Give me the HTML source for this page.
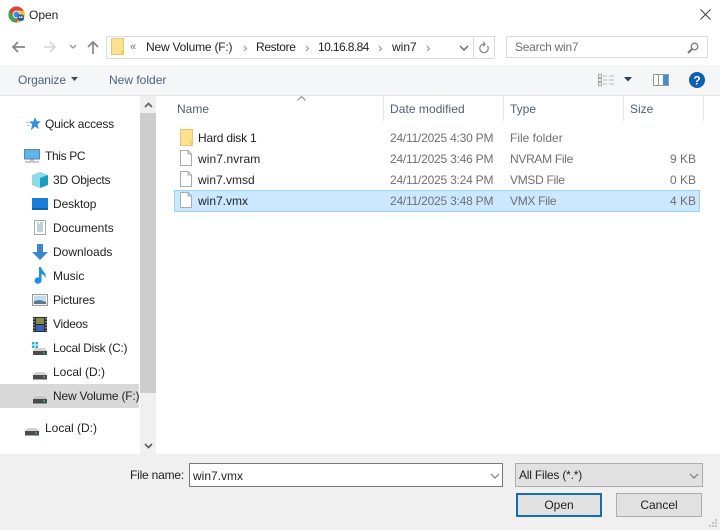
<!DOCTYPE html>
<html><head><meta charset="utf-8"><style>
html,body{margin:0;padding:0;background:#fff}
body{width:720px;height:530px;position:relative;overflow:hidden;font-family:"Liberation Sans",sans-serif;font-size:12px;color:#222}
.a{position:absolute}
.t{position:absolute;white-space:nowrap;line-height:16px}
svg{position:absolute;overflow:visible}
.g{color:#707070}
.h{color:#4f6178}
.n{letter-spacing:-.2px}
</style></head><body>

<!-- title -->
<svg style="left:8px;top:6px" width="17" height="17" viewBox="0 0 16 16">
<circle cx="8" cy="8" r="7.6" fill="#d9463a"/>
<path d="M1.2 4.600 A7.600 7.600 0 0 0 6.500 15.500 L9 10 L5 9z" fill="#3ea552"/>
<path d="M8 4.500H15A7.600 7.600 0 0 1 8 15.600 L11 9z" fill="#f6c21b"/>
<circle cx="8" cy="8" r="3.600" fill="#fff"/><circle cx="8" cy="8" r="2.800" fill="#4a86e0"/>
<rect x="9" y="8" width="6" height="6" rx="2" fill="#1f5fa8"/><circle cx="11" cy="10.500" r=".8" fill="#fff"/><circle cx="13" cy="10.500" r=".8" fill="#fff"/>
</svg>
<div class="t" style="left:29px;top:7px">Open</div>
<svg style="left:700px;top:9px" width="11" height="11"><path d="M.5 .5L10.500 10.500M10.500 .5L.5 10.500" stroke="#333" stroke-width=".9" fill="none"/></svg>

<!-- nav -->
<svg style="left:12px;top:41px" width="14" height="12"><path d="M1 6H13M6 1L1 6L6 11" stroke="#858585" stroke-width="1.700" fill="none"/></svg>
<svg style="left:43px;top:41px" width="14" height="12"><path d="M1 6H12M7 1L12 6L7 11" stroke="#d6d6d6" stroke-width="1.600" fill="none"/></svg>
<svg style="left:69px;top:44px" width="8" height="6"><path d="M1 1L4 4L7 1" stroke="#969696" stroke-width="1.300" fill="none"/></svg>
<svg style="left:87px;top:41px" width="12" height="13"><path d="M6 13V1M1 6L6 1L11 6" stroke="#858585" stroke-width="1.700" fill="none"/></svg>

<!-- address -->
<div class="a" style="left:106px;top:36px;width:387px;height:21px;border:1px solid #dcdcdc;background:#fff"></div>
<div class="a" style="left:473px;top:37px;width:1px;height:21px;background:#dcdcdc"></div>
<svg style="left:111px;top:38px" width="13" height="17"><path d="M.5 .5H12.500V16.500H.5z" fill="#fce28e" stroke="#e3c877"/><path d="M10 12h2.500v4.500H10z" fill="#f4cf6f"/></svg>
<div class="t g" style="left:130px;top:39px;font-size:11px">&#171;</div>
<div class="t n" style="left:146px;top:39px">New Volume (F:)</div>
<svg style="left:243px;top:45px" width="5" height="7"><path d="M1 1L3.500 3.500L1 6" stroke="#999" stroke-width="1.200" fill="none"/></svg>
<div class="t" style="left:256px;top:39px;letter-spacing:-.35px">Restore</div>
<svg style="left:305px;top:45px" width="5" height="7"><path d="M1 1L3.500 3.500L1 6" stroke="#999" stroke-width="1.200" fill="none"/></svg>
<div class="t" style="left:318px;top:39px;letter-spacing:-.6px">10.16.8.84</div>
<svg style="left:378px;top:45px" width="5" height="7"><path d="M1 1L3.500 3.500L1 6" stroke="#999" stroke-width="1.200" fill="none"/></svg>
<div class="t" style="left:392px;top:39px">win7</div>
<svg style="left:426px;top:45px" width="5" height="7"><path d="M1 1L3.500 3.500L1 6" stroke="#999" stroke-width="1.200" fill="none"/></svg>
<svg style="left:459px;top:45px" width="10" height="7"><path d="M1 1L5 5L9 1" stroke="#6d6d6d" stroke-width="1.500" fill="none"/></svg>
<svg style="left:478px;top:41px" width="12" height="13"><path d="M9.500 5A4.200 4.200 0 1 1 5.500 3.200H6.500M5 .8L7 3.200L5 5.400" stroke="#858585" stroke-width="1.200" fill="none"/></svg>

<!-- search -->
<div class="a" style="left:506px;top:36px;width:200px;height:20px;border:1px solid #dcdcdc;background:#fff"></div>
<div class="t g n" style="left:515px;top:39px;letter-spacing:-.25px">Search win7</div>
<svg style="left:687px;top:42px" width="12" height="12"><circle cx="7.500" cy="4.500" r="3.300" fill="none" stroke="#7a7a7a" stroke-width="1.300"/><path d="M5 7L1 11" stroke="#7a7a7a" stroke-width="2"/></svg>

<!-- toolbar -->
<div class="a" style="left:0;top:65px;width:720px;height:30px;background:#f5f6f7;border-bottom:1px solid #e5e8eb"></div>
<div class="t h" style="left:18px;top:72px;letter-spacing:-.1px">Organize</div>
<svg style="left:71px;top:77px" width="8" height="5"><path d="M0 0H7L3.500 4z" fill="#3c4a5c"/></svg>
<div class="t h" style="left:109px;top:72px">New folder</div>
<svg style="left:598px;top:74px" width="16" height="12"><path d="M.5 .5h3v3h-3zM.5 4.500h3v3h-3zM.5 8.500h3v3h-3z" fill="none" stroke="#aaa"/><path d="M5 2H9M5 6H9M5 10H9M11 2H16M11 6H16M11 10H16" stroke="#bbb"/></svg>
<svg style="left:624px;top:77px" width="8" height="5"><path d="M0 0H8L4 4.500z" fill="#2e3f55"/></svg>
<svg style="left:653px;top:74px" width="16" height="12"><path d="M.5 .5H15.500V11.500H.5z" fill="#fff" stroke="#999"/><path d="M5.500 .5V11.500" stroke="#999"/><rect x="10" y="1" width="5" height="10" fill="#3f8fd8"/></svg>
<svg style="left:689px;top:72px" width="16" height="16"><circle cx="8" cy="8" r="8" fill="#0e5fb3"/><text x="8" y="12.500" text-anchor="middle" font-family="Liberation Sans" font-size="12" font-weight="bold" fill="#fff">?</text></svg>

<!-- scrollbar -->
<div class="a" style="left:140px;top:96px;width:16px;height:358px;background:#f0f0f0"></div>
<div class="a" style="left:140px;top:113px;width:16px;height:280px;background:#cdcdcd"></div>
<svg style="left:144px;top:102px" width="9" height="6"><path d="M1 5L4.500 1.500L8 5" stroke="#606060" stroke-width="1.700" fill="none"/></svg>
<svg style="left:144px;top:443px" width="9" height="6"><path d="M1 1L4.500 4.500L8 1" stroke="#606060" stroke-width="1.700" fill="none"/></svg>

<!-- sidebar -->
<div class="a" style="left:0;top:384px;width:139px;height:24px;background:#d9d9d9"></div>
<svg style="left:26px;top:117px" width="15" height="14"><path d="M9 0L10.800 4.300H14.800L11.600 7.300L12.700 12L9 9.500L4.800 13.500L6.300 7.500L3.200 4.500H7.300z" fill="#2f8fdc"/><path d="M0 5.500H3M1 8.500H4" stroke="#a8d0ee"/></svg>
<div class="t n" style="left:45px;top:116px">Quick access</div>
<svg style="left:24px;top:149px" width="16" height="14"><rect x=".5" y=".5" width="15" height="9.500" fill="#5fb4ee" stroke="#5a87a8"/><path d="M6 11H10M1 13H15" stroke="#a0aab4" stroke-width="1.200"/></svg>
<div class="t" style="left:45px;top:148px;letter-spacing:-.35px">This PC</div>
<svg style="left:32px;top:172px" width="16" height="16"><path d="M8 0L16 3V13L8 16L0 13V3z" fill="#8fd8ea"/><path d="M8 6L16 3V13L8 16z" fill="#1a9dc0"/><path d="M0 3L8 6V16L0 13z" fill="#8edbe8"/></svg>
<div class="t n" style="left:53px;top:172px">3D Objects</div>
<svg style="left:32px;top:198px" width="16" height="12"><rect width="16" height="12" fill="#1a7ed6"/><rect x=".5" y="10" width="15" height="1.500" fill="#0c5aa8"/></svg>
<div class="t" style="left:53px;top:196px;letter-spacing:-.1px">Desktop</div>
<svg style="left:34px;top:220px" width="12" height="15"><path d="M.5 .5H11.500V14.500H.5z" fill="#fff" stroke="#a8a8a8"/><path d="M6 3H9M3 5H9M3 7H9M3 9H9M3 11H9M3 3H5" stroke="#7da3c2"/></svg>
<div class="t" style="left:53px;top:220px">Documents</div>
<svg style="left:32px;top:244px" width="16" height="16"><path d="M5 0H11V8H16L8 16L0 8H5z" fill="#3b86cf"/></svg>
<div class="t" style="left:53px;top:244px">Downloads</div>
<svg style="left:34px;top:267px" width="13" height="17"><path d="M5 0H7C7.500 4 13 5.500 11.500 11C10.500 8 8.500 7 7.500 7V13.500A3.500 3.200 0 1 1 5 10.500z" fill="#1e8fe0"/></svg>
<div class="t" style="left:53px;top:268px">Music</div>
<svg style="left:32px;top:294px" width="16" height="12"><rect x=".5" y=".5" width="15" height="11" fill="#eef2f5" stroke="#9a9a9a"/><rect x="2" y="2" width="12" height="8" fill="#c2dcee"/><path d="M2 7L8 6L14 8V10H2z" fill="#5a7a8c"/></svg>
<div class="t n" style="left:53px;top:292px">Pictures</div>
<svg style="left:33px;top:317px" width="14" height="15"><rect width="14" height="15" fill="#2a2a2a"/><rect x="3" y="1" width="8" height="6" fill="#8a8a48"/><rect x="3" y="8" width="8" height="6" fill="#3a64b8"/><path d="M1 1V14M13 1V14" stroke="#ddd" stroke-dasharray="1.500 1.500"/></svg>
<div class="t" style="left:53px;top:316px;letter-spacing:-.3px">Videos</div>
<svg style="left:32px;top:345px" width="16" height="11"><path d="M0 -3H2.500V-.5H0zM3.500 -3H6V-.5H3.500zM0 .5H2.500V3H0zM3.500 .5H6V3H3.500z" fill="#22b0d8"/><path d="M3 3H13L15 6H1z" fill="#d2d2d2"/><rect x="1" y="6" width="14" height="4" fill="#4a4a4a"/><rect x="11" y="7.500" width="2" height="1" fill="#4ccf5a"/></svg>
<div class="t" style="left:53px;top:340px;letter-spacing:-.3px">Local Disk (C:)</div>
<svg style="left:33px;top:372px" width="14" height="8"><path d="M2.500 0H11.500L14 3H0z" fill="#d2d2d2"/><rect y="3" width="14" height="4.500" fill="#4a4a4a"/><rect x="10" y="4.500" width="2" height="1.200" fill="#4ccf5a"/></svg>
<div class="t" style="left:53px;top:364px">Local (D:)</div>
<svg style="left:33px;top:396px" width="14" height="8"><path d="M2.500 0H11.500L14 3H0z" fill="#c4c4c4"/><rect y="3" width="14" height="4.500" fill="#4a4a4a"/><rect x="10" y="4.500" width="2" height="1.200" fill="#4ccf5a"/></svg>
<div class="t n" style="left:53px;top:388px">New Volume (F:)</div>
<svg style="left:25px;top:428px" width="14" height="8"><path d="M2.500 0H11.500L14 3H0z" fill="#d2d2d2"/><rect y="3" width="14" height="4.500" fill="#4a4a4a"/><rect x="10" y="4.500" width="2" height="1.200" fill="#4ccf5a"/></svg>
<div class="t" style="left:45px;top:420px">Local (D:)</div>

<!-- header -->
<svg style="left:297px;top:96px" width="9" height="5"><path d="M.5 4.500L4.500 .5L8.500 4.500" stroke="#8a8a8a" fill="none"/></svg>
<div class="t h" style="left:177px;top:101px">Name</div>
<div class="a" style="left:383px;top:96px;width:1px;height:25px;background:#e5e5e5"></div>
<div class="t h" style="left:390px;top:101px;letter-spacing:.05px">Date modified</div>
<div class="a" style="left:503px;top:96px;width:1px;height:25px;background:#e5e5e5"></div>
<div class="t h" style="left:510px;top:101px">Type</div>
<div class="a" style="left:623px;top:96px;width:1px;height:25px;background:#e5e5e5"></div>
<div class="t h" style="left:630px;top:101px">Size</div>
<div class="a" style="left:703px;top:96px;width:1px;height:25px;background:#e5e5e5"></div>

<!-- rows -->
<div class="a" style="left:174px;top:190px;width:524px;height:20px;background:#cce8ff;border:1px solid #99d1ff"></div>
<svg style="left:180px;top:129px" width="13" height="17"><path d="M.5 .5H12.500V16.500H.5z" fill="#fce28e" stroke="#e3c877"/><path d="M10 12h2.500v4.500H10z" fill="#f4cf6f"/></svg>
<svg style="left:180px;top:150px" width="12" height="16"><path d="M.5 .5H8L11.500 4V15.500H.5zM8 .5V4H11.500" fill="#fff" stroke="#aaa"/></svg>
<svg style="left:180px;top:171px" width="12" height="16"><path d="M.5 .5H8L11.500 4V15.500H.5zM8 .5V4H11.500" fill="#fff" stroke="#aaa"/></svg>
<svg style="left:180px;top:192px" width="12" height="16"><path d="M.5 .5H8L11.500 4V15.500H.5zM8 .5V4H11.500" fill="#fff" stroke="#aaa"/></svg>
<div class="t n" style="left:198px;top:130px">Hard disk 1</div>
<div class="t" style="left:198px;top:151px;letter-spacing:.1px">win7.nvram</div>
<div class="t" style="left:198px;top:172px">win7.vmsd</div>
<div class="t" style="left:198px;top:193px">win7.vmx</div>
<div class="t g n" style="left:390px;top:130px;letter-spacing:-.22px">24/11/2025 4:30 PM</div>
<div class="t g n" style="left:390px;top:151px;letter-spacing:-.22px">24/11/2025 3:46 PM</div>
<div class="t g n" style="left:390px;top:172px;letter-spacing:-.22px">24/11/2025 3:24 PM</div>
<div class="t g n" style="left:390px;top:193px;letter-spacing:-.22px">24/11/2025 3:48 PM</div>
<div class="t g" style="left:510px;top:130px">File folder</div>
<div class="t g" style="left:510px;top:151px;letter-spacing:-.3px">NVRAM File</div>
<div class="t g" style="left:510px;top:172px;letter-spacing:-.3px">VMSD File</div>
<div class="t g" style="left:510px;top:193px;letter-spacing:-.3px">VMX File</div>
<div class="t g" style="right:24px;top:151px">9 KB</div>
<div class="t g" style="right:24px;top:172px">0 KB</div>
<div class="t g" style="right:24px;top:193px">4 KB</div>

<!-- bottom -->
<div class="a" style="left:0;top:454px;width:720px;height:76px;background:#f0f0f0"></div>
<div class="t n" style="left:130px;top:467px">File name:</div>
<div class="a" style="left:189px;top:463px;width:312px;height:22px;border:1px solid #7a7a7a;background:#fff"></div>
<div class="t" style="left:193px;top:468px">win7.vmx</div>
<svg style="left:490px;top:473px" width="10" height="6"><path d="M1 1L5 5L9 1" stroke="#6d6d6d" fill="none"/></svg>
<div class="a" style="left:515px;top:463px;width:186px;height:22px;border:1px solid #adadad;background:#e1e1e1"></div>
<div class="t n" style="left:519px;top:467px">All Files (*.*)</div>
<svg style="left:689px;top:473px" width="10" height="6"><path d="M1 1L5 5L9 1" stroke="#6d6d6d" fill="none"/></svg>
<div class="a" style="left:516px;top:493px;width:82px;height:20px;border:2px solid #1a6ea8;background:#e1e1e1"></div>
<div class="t" style="left:516px;top:497px;width:86px;text-align:center">Open</div>
<div class="a" style="left:616px;top:493px;width:84px;height:22px;border:1px solid #adadad;background:#e1e1e1"></div>
<div class="t" style="left:616px;top:497px;width:86px;text-align:center">Cancel</div>
<svg style="left:708px;top:518px" width="10" height="10"><path d="M7 1h2v2H7zM4 4h2v2H4zM7 4h2v2H7zM1 7h2v2H1zM4 7h2v2H4zM7 7h2v2H7z" fill="#c4c4c4"/></svg>
</body></html>
